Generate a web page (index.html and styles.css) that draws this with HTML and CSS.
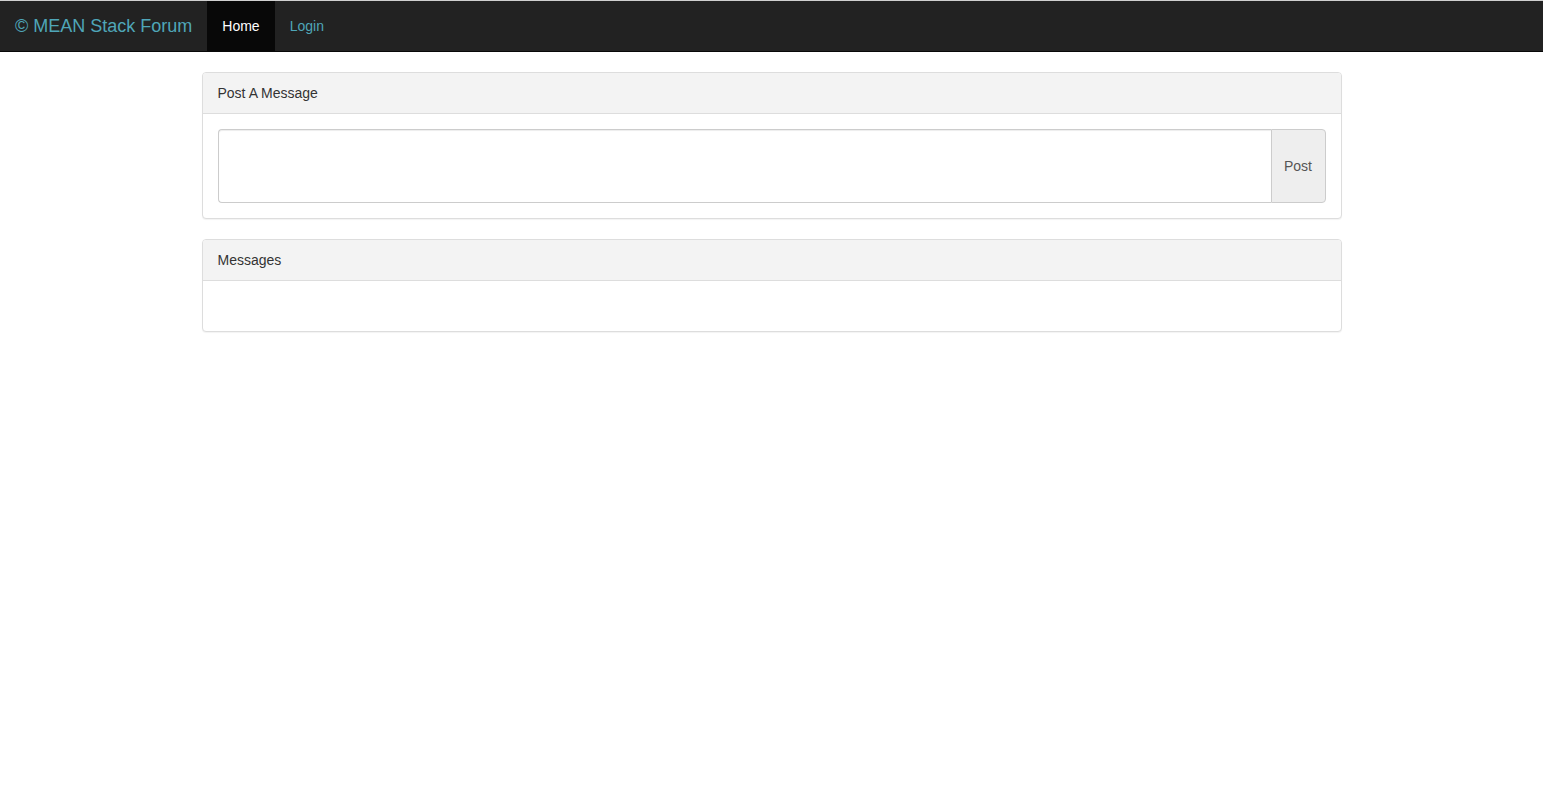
FILE: index.html
```html
<!DOCTYPE html>
<html>
<head>
<meta charset="utf-8">
<title>MEAN Stack Forum</title>
<link rel="stylesheet" href="styles.css">
</head>
<body>
<nav class="navbar">
  <a class="brand" href="#">© MEAN Stack Forum</a>
  <ul class="nav">
    <li><a class="nav-link active" href="#">Home</a></li>
    <li><a class="nav-link" href="#">Login</a></li>
  </ul>
</nav>
<main class="container">
  <section class="panel">
    <div class="panel-heading">Post A Message</div>
    <div class="panel-body">
      <div class="input-group">
        <textarea class="form-control"></textarea>
        <button class="btn-post">Post</button>
      </div>
    </div>
  </section>
  <section class="panel">
    <div class="panel-heading">Messages</div>
    <div class="panel-body messages"></div>
  </section>
</main>
</body>
</html>
```

FILE: styles.css
```css
* { box-sizing: border-box; }
html, body { margin: 0; padding: 0; }
body {
  font-family: "Liberation Sans", Arial, Helvetica, sans-serif;
  font-size: 14px;
  line-height: 1.42857;
  color: #333;
  background: #fff;
}
.navbar {
  display: flex;
  align-items: stretch;
  height: 52px;
  background: #222;
  border-top: 1px solid #d0d0d0;
  border-bottom: 1px solid #080808;
  margin-bottom: 20px;
}
.brand {
  display: block;
  padding: 15px;
  height: 50px;
  font-size: 18px;
  line-height: 20px;
  color: #4fa6b8;
  text-decoration: none;
}
.nav {
  display: flex;
  list-style: none;
  margin: 0;
  padding: 0;
}
.nav-link {
  display: block;
  padding: 15px;
  line-height: 20px;
  height: 50px;
  color: #4fa6b8;
  text-decoration: none;
}
.nav-link.active {
  background: #080808;
  color: #fff;
}
.container {
  width: 1170px;
  margin: 0 auto;
  padding: 0 15px;
}
.panel {
  border: 1px solid #ddd;
  border-radius: 4px;
  margin-bottom: 20px;
  background: #fff;
  box-shadow: 0 1px 1px rgba(0,0,0,0.05);
}
.panel-heading {
  background: #f3f3f3;
  border-bottom: 1px solid #ddd;
  border-radius: 3px 3px 0 0;
  padding: 11px 15px 9px;
  height: 41px;
}
.panel-body {
  padding: 15px;
}
.messages {
  height: 50px;
}
.input-group {
  display: flex;
  height: 74px;
}
.form-control {
  flex: 1;
  margin: 0;
  border: 1px solid #ccc;
  border-right: none;
  border-radius: 4px 0 0 4px;
  box-shadow: inset 0 1px 1px rgba(0,0,0,0.075);
  resize: none;
  font-family: inherit;
  font-size: 14px;
  padding: 6px 12px;
}
.btn-post {
  width: 55px;
  margin: 0;
  border: 1px solid #ccc;
  border-radius: 0 4px 4px 0;
  background: #eee;
  color: #555;
  font-family: inherit;
  font-size: 14px;
  padding: 6px 12px;
}
```
